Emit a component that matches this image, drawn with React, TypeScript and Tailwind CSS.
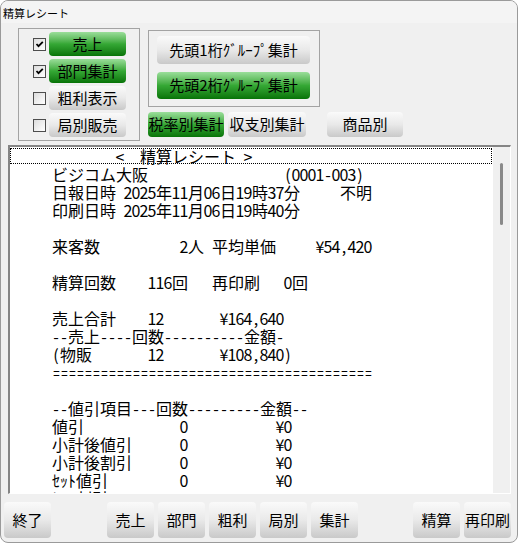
import React from "react";

const FONT = { fontFamily: '"Noto Sans CJK JP", "Noto Sans", sans-serif' };

const isHalf = (c: string) => {
  const n = c.charCodeAt(0);
  return n < 0x100 || (n >= 0xff61 && n <= 0xff9f);
};

// build a fixed-pitch line from [column, text] pieces
function build(segs: [number, string][]) {
  let s = "";
  let col = 0;
  for (const [c, t] of segs) {
    while (col < c) {
      s += " ";
      col++;
    }
    s += t;
    for (const ch of Array.from(t)) col += isHalf(ch) ? 1 : 2;
  }
  return s;
}

const LINES: string[] = [
  build([[5, "ビジコム大阪"], [34, "(0001-003)"]]),
  build([[5, "日報日時 2025年11月06日19時37分"], [41, "不明"]]),
  build([[5, "印刷日時 2025年11月06日19時40分"]]),
  "",
  build([[5, "来客数"], [21, "2人"], [25, "平均単価"], [38, "¥54,420"]]),
  "",
  build([[5, "精算回数"], [17, "116回"], [25, "再印刷"], [34, "0回"]]),
  "",
  build([[5, "売上合計"], [17, "12"], [26, "¥164,640"]]),
  build([[5, "--売上----回数----------金額-"]]),
  build([[5, "(物販"], [17, "12"], [26, "¥108,840)"]]),
  build([[5, "========================================"]]),
  "",
  build([[5, "--値引項目---回数---------金額--"]]),
  build([[5, "値引"], [21, "0"], [33, "¥0"]]),
  build([[5, "小計後値引"], [21, "0"], [33, "¥0"]]),
  build([[5, "小計後割引"], [21, "0"], [33, "¥0"]]),
  build([[5, "ｾｯﾄ値引"], [21, "0"], [33, "¥0"]]),
  build([[5, "ｾｯﾄ割引"], [21, "0"], [33, "¥0"]]),
];

function Cells({ text }: { text: string }) {
  return (
    <>
      {Array.from(text).map((ch, i) => {
        if (ch === "=")
          return (
            <span key={i} className="inline-flex justify-center w-[8px]">
              <span className="inline-block scale-x-[0.72]">=</span>
            </span>
          );
        return isHalf(ch) ? (
          <span key={i} className="inline-flex justify-center w-[8px]">
            {ch === " " ? "\u00a0" : ch}
          </span>
        ) : (
          <span key={i} className="inline-flex justify-center w-[16px]">
            {ch}
          </span>
        );
      })}
    </>
  );
}

function Btn({
  label,
  green,
  className,
}: {
  label: string;
  green?: boolean;
  className: string;
}) {
  return (
    <div
      className={
        (green
          ? "bg-linear-to-b from-[#9ade9a] via-[#35a835] to-[#067406] "
          : "bg-linear-to-b from-[#fafafa] via-[#e9e9e9] to-[#c9c9c9] ") +
        "flex items-center justify-center rounded-[4px] text-[15px] text-black whitespace-nowrap " +
        className
      }
    >
      {label}
    </div>
  );
}

function Check({ checked }: { checked?: boolean }) {
  return (
    <div className="w-[13px] h-[13px] shrink-0 border border-[#4d4d4d] bg-linear-to-br from-[#dcdcdc] to-white flex items-center justify-center">
      {checked && (
        <svg width="9" height="9" viewBox="0 0 9 9">
          <path d="M1.5 4 L3.5 6.2 L7.8 1.8" fill="none" stroke="#000" strokeWidth="1.8" />
        </svg>
      )}
    </div>
  );
}

const LEFT = [
  { label: "売上", checked: true },
  { label: "部門集計", checked: true },
  { label: "粗利表示", checked: false },
  { label: "局別販売", checked: false },
];

export default function App() {
  return (
    <div className="w-[518px] h-[543px] bg-white" style={FONT}>
      <div className="w-full h-full border border-[#9a9a9a] rounded-[8px] bg-[#f0f0f0] flex flex-col overflow-hidden">
        {/* title */}
        <div className="h-[22px] shrink-0 pl-[2px] pt-[6px] text-[11px] leading-[12px] text-black bg-[#f4f4f4]">
          精算レシート
        </div>

        {/* option groups */}
        <div className="flex items-start ml-[17px] mt-[5px] shrink-0">
          <div className="w-[122px] h-[113px] border border-[#a3a3a3] pt-[3px] pl-[14px] flex flex-col gap-[3px]">
            {LEFT.map((o) => (
              <div key={o.label} className="h-[24px] flex items-center gap-[3px]">
                <Check checked={o.checked} />
                <Btn label={o.label} green={o.checked} className="w-[77px] h-[24px]" />
              </div>
            ))}
          </div>

          <div className="ml-[8px] mt-[2px] flex flex-col">
            <div className="w-[172px] h-[77px] border border-[#a3a3a3] pt-[5px] pl-[8px] flex flex-col gap-[8px]">
              <Btn label="先頭1桁ｸﾞﾙｰﾌﾟ集計" className="w-[153px] h-[28px]" />
              <Btn label="先頭2桁ｸﾞﾙｰﾌﾟ集計" green className="w-[153px] h-[27px]" />
            </div>
            <div className="mt-[5px] flex items-center">
              <Btn label="税率別集計" green className="w-[76px] h-[25px]" />
              <Btn label="収支別集計" className="ml-[4px] w-[78px] h-[25px]" />
              <Btn label="商品別" className="ml-[21px] w-[76px] h-[25px]" />
            </div>
          </div>
        </div>

        {/* receipt list */}
        <div className="ml-[7px] mt-[4px] w-[503px] h-[349px] shrink-0 border-t-2 border-l-2 border-[#858585] border-r border-b border-r-white border-b-white bg-white flex">
          <div className="flex-1 overflow-hidden text-[16px] leading-[18px] text-black">
            <div className="h-[18px] pt-[1px]">
              <div className="w-[482px] h-[16px] border border-dotted border-black pl-[1px] flex items-center leading-[14px]">
                <Cells text={build([[13, "<"], [16, "精算レシート"], [29, ">"]])} />
              </div>
            </div>
            {LINES.map((l, i) => (
              <div key={i} className="h-[18px] pl-[2px] whitespace-pre flex items-center">
                <Cells text={l} />
              </div>
            ))}
          </div>
          <div className="w-[17px] shrink-0 bg-[#f0f0f0] flex justify-center pt-[16px]">
            <div className="w-[3px] h-[62px] bg-[#8a8a8a] rounded-full" />
          </div>
        </div>

        {/* bottom buttons */}
        <div className="flex mt-[8px] ml-[3px] shrink-0">
          <Btn label="終了" className="w-[47px] h-[36px]" />
          <div className="ml-[56px] flex gap-[4px]">
            {["売上", "部門", "粗利", "局別", "集計"].map((b) => (
              <Btn key={b} label={b} className="w-[47px] h-[36px]" />
            ))}
          </div>
          <div className="ml-[55px] flex gap-[4px]">
            <Btn label="精算" className="w-[47px] h-[36px]" />
            <Btn label="再印刷" className="w-[47px] h-[36px]" />
          </div>
        </div>
      </div>
    </div>
  );
}
